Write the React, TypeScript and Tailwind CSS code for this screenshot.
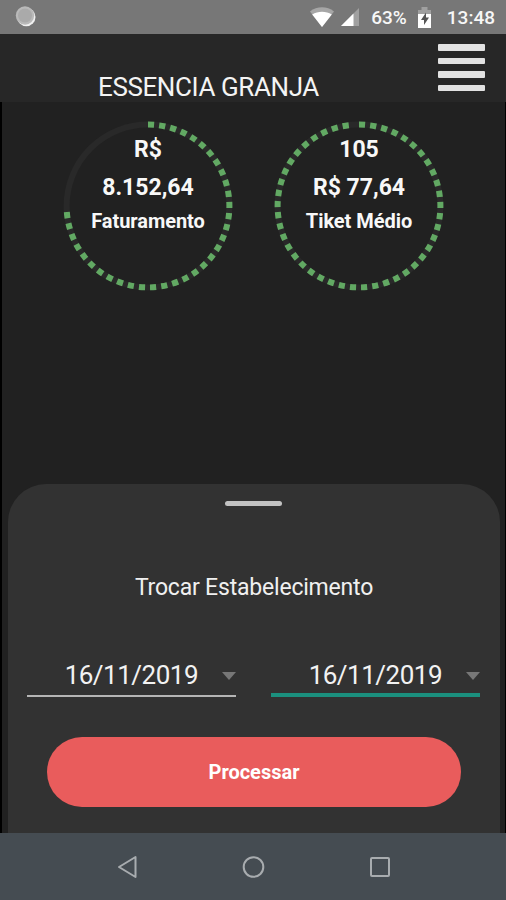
import { useState } from "react";
import clsx from "clsx";

const RADIUS = 81.4;
const STEP = 11.23;
const DASH = 6.2;

interface GaugeProps {
  lines: string[];
  label: string;
  ticks: number;
}

function Gauge({ lines, label, ticks }: GaugeProps) {
  const circumference = 2 * Math.PI * RADIUS;
  // dash/gap pairs, closed by one gap covering the rest of the ring
  const pattern = Array.from({ length: ticks }, (_, i) =>
    i === ticks - 1 ? `${DASH} ${circumference}` : `${DASH} ${STEP - DASH}`
  ).join(" ");

  return (
    <div className="relative h-[170px] w-[170px]">
      <svg viewBox="0 0 170 170" className="absolute inset-0 h-full w-full">
        <g fill="none" strokeWidth="6" transform="rotate(-90 85 85)">
          <circle cx="85" cy="85" r={RADIUS} stroke="#292929" />
          <circle cx="85" cy="85" r={RADIUS} stroke="#62a963" strokeDasharray={pattern} />
        </g>
      </svg>
      <div className="relative flex flex-col items-center pt-[10px] font-bold whitespace-nowrap text-[#f8f8f8]">
        {lines.map((line) => (
          <span key={line} className="text-[23px] leading-[38px]">{line}</span>
        ))}
        <span className="text-[20px] leading-[28px] tracking-[-0.05px]">{label}</span>
      </div>
    </div>
  );
}

interface DateFieldProps {
  value: string;
  active: boolean;
  onFocus: () => void;
}

function DateField({ value, active, onFocus }: DateFieldProps) {
  return (
    <button
      onClick={onFocus}
      className={clsx(
        "flex h-[44px] w-[209px] items-start justify-end",
        active ? "border-b-4 border-[#1b907e]" : "border-b-2 border-[#b5b5b5]"
      )}
    >
      <span className="mr-[24px] text-[26px] leading-[45px] tracking-[-0.5px] text-[#f2f2f2]">{value}</span>
      <svg viewBox="0 0 14 8" className="mt-[19px] h-[8px] w-[14px]">
        <path d="M0 0h14L7 8z" fill="#777" />
      </svg>
    </button>
  );
}

function StatusBar() {
  return (
    <div className="flex h-[34px] items-center bg-[#777777] pr-[11px] pl-[15px] text-[19px] font-medium text-[#f7f7f7]">
      <svg viewBox="0 0 22 22" className="mr-auto h-[22px] w-[22px]">
        <circle cx="11.3" cy="11" r="9.2" fill="#f0f0f0" />
        <circle cx="10" cy="9.5" r="9.2" fill="#b9b9b9" />
        <circle cx="10" cy="9.5" r="7" fill="#aaaaaa" />
      </svg>
      <svg viewBox="0 0 24 20" className="h-[20px] w-[24px]">
        <path d="M0 4.4C7-1.1 17-1.1 24 4.4L12 20z" fill="#a6a6a6" />
        <path d="M2.2 7.4C8 3.8 16 3.8 21.8 7.4L12 20z" fill="#fff" />
      </svg>
      <svg viewBox="0 0 18 18" className="ml-[7px] h-[18px] w-[18px]">
        <path d="M18 0v18H0z" fill="#a0a0a0" />
        <path d="M12.5 5.5V18H0z" fill="#fff" />
      </svg>
      <span className="ml-[12px] pt-[2px] leading-[34px]">63%</span>
      <svg viewBox="0 0 13 21" className="ml-[11px] h-[21px] w-[13px]">
        <path d="M0 3h3.5V0h6v3H13v5H0z" fill="#a0a0a0" />
        <path d="M0 7h13v14H0z" fill="#fff" />
        <path d="M8 5.5L3 13h3v5l5-7.500H8z" fill="#555" />
      </svg>
      <span className="ml-[16px] pt-[2px] leading-[34px]">13:48</span>
    </div>
  );
}

function NavBar() {
  return (
    <div className="flex h-[67px] items-center justify-center gap-[104px] bg-[#454c52]">
      <svg viewBox="0 0 22 24" className="h-[24px] w-[22px]" fill="none" stroke="#a8acaf" strokeWidth="2" strokeLinejoin="round">
        <path d="M20.500 2v20L4 12z" />
      </svg>
      <svg viewBox="0 0 24 24" className="h-[24px] w-[24px]" fill="none" stroke="#a8acaf" strokeWidth="2">
        <circle cx="12.500" cy="12" r="9.800" />
      </svg>
      <svg viewBox="0 0 22 24" className="h-[24px] w-[22px]" fill="none" stroke="#a8acaf" strokeWidth="2">
        <rect x="2" y="3" width="18" height="18" rx="1" />
      </svg>
    </div>
  );
}

export default function App() {
  const [activeDate, setActiveDate] = useState(1);
  const dates = ["16/11/2019", "16/11/2019"];

  return (
    <div className="flex h-[900px] w-[506px] flex-col overflow-hidden bg-[#212121] font-['Roboto',sans-serif]">
      <StatusBar />

      <header className="flex h-[68px] items-start justify-between bg-[#272727] pr-[21px] pl-[98px]">
        <h1 className="pt-[34px] text-[26px] leading-[38px] tracking-[-0.4px] whitespace-nowrap text-[#f4f4f4]">ESSENCIA GRANJA</h1>
        <button className="flex flex-col gap-[7px] pt-[10px]" aria-label="Menu">
          {[0, 1, 2, 3].map((i) => (
            <span key={i} className="h-[6.500px] w-[47px] rounded-[1px] bg-[#e2e2e2]" />
          ))}
        </button>
      </header>

      <main className="flex flex-1 flex-col justify-between border-r border-l-2 border-r-black border-l-black px-[6px]">
        <div className="flex gap-[41px] pt-[19px] pl-[55px]">
          <Gauge lines={["R$", "8.152,64"]} label="Faturamento" ticks={34} />
          <Gauge lines={["105", "R$ 77,64"]} label="Tiket Médio" ticks={45} />
        </div>

        <section className="flex h-[349px] w-[492px] flex-col items-center rounded-t-[38px] bg-[#323232]">
          <span className="mt-[17px] mr-[2px] h-[5px] w-[57px] rounded-full bg-[#c2c2c2]" />
          <p className="mt-[67px] text-[23px] leading-[30px] tracking-[-0.2px] text-[#f0f0f0]">Trocar Estabelecimento</p>
          <div className="mt-[50px] flex w-full justify-between pr-[20px] pl-[19px]">
            {dates.map((date, i) => (
              <DateField key={i} value={date} active={activeDate === i} onFocus={() => setActiveDate(i)} />
            ))}
          </div>
          <button className="mt-[40px] h-[70px] w-[414px] rounded-full bg-[#e95c5c] pb-px text-[20px] font-bold text-white">
            Processar
          </button>
        </section>
      </main>

      <NavBar />
    </div>
  );
}
